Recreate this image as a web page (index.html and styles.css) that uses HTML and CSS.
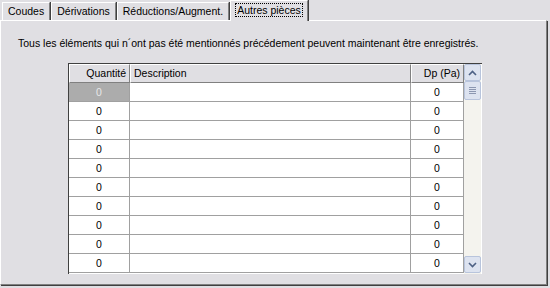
FILE: index.html
```html
<!DOCTYPE html>
<html lang="fr">
<head>
  <meta charset="UTF-8">
  <title>Autres pièces</title>
  <link rel="stylesheet" href="styles.css">
</head>
<body>
  <div class="tabs">
    <div class="tab">Coudes</div>
    <div class="tab">Dérivations</div>
    <div class="tab">Réductions/Augment.</div>
    <div class="tab active"><span class="focus">Autres pièces</span></div>
  </div>
  <div class="panel">
    <p class="note">Tous les éléments qui n´ont pas été mentionnés précédement peuvent maintenant être enregistrés.</p>
    <div class="grid">
      <div class="cells">
        <div class="row head">
          <div class="c qty">Quantité</div>
          <div class="c desc">Description</div>
          <div class="c dp">Dp (Pa)</div>
        </div>
        <div id="rows"></div>
      </div>
      <div class="scroll">
        <div class="btn up"><svg width="9" height="6" viewBox="0 0 9 6"><path d="M1 5 L4.5 1.5 L8 5" fill="none" stroke="#4d6185" stroke-width="1.6"/></svg></div>
        <div class="thumb"><span></span><span></span><span></span><span></span></div>
        <div class="track"></div>
        <div class="btn down"><svg width="9" height="6" viewBox="0 0 9 6"><path d="M1 1 L4.5 4.5 L8 1" fill="none" stroke="#4d6185" stroke-width="1.6"/></svg></div>
      </div>
    </div>
  </div>

  <script>
    const rows = document.getElementById("rows");
    for (let i = 0; i < 10; i++) {
      const r = document.createElement("div");
      r.className = "row" + (i === 0 ? " sel" : "");
      r.innerHTML = '<div class="c qty">0</div><div class="c desc"></div><div class="c dp">0</div>';
      rows.appendChild(r);
    }
  </script>
</body>
</html>
```

FILE: styles.css
```css
body {
  margin: 0;
  background: #e0dfe3;
  font-family: "Liberation Sans", Arial, sans-serif;
  font-size: 10.5px;
  color: #000;
  width: 550px;
  height: 288px;
  overflow: hidden;
}
.tabs {
  display: flex;
  height: 20px;
  padding-left: 2px;
  align-items: flex-end;
}
.tab {
  height: 18px;
  line-height: 17px;
  padding: 0 5px 0 5px;
  border-left: 1px solid #fff;
  border-top: 1px solid #fff;
  border-right: 1px solid #808080;
  box-shadow: 1px 0 0 #404040;
  margin-right: 1px;
  box-sizing: border-box;
}
.tab.active {
  height: 21px;
  margin-bottom: -1px;
  position: relative;
  z-index: 2;
  background: #e0dfe3;
  padding: 0 4px;
  line-height: 19px;
}
.focus {
  border: 1px dotted #000;
  padding: 0 1px;
}
.panel {
  height: 265px;
  width: 547px;
  box-sizing: border-box;
  border-top: 1px solid #fff;
  border-left: 1px solid #fff;
  border-right: 1px solid #808080;
  border-bottom: 1px solid #808080;
  box-shadow: 1px 1px 0 #404040;
  padding: 16px 0 0 16px;
}
.note {
  margin: 0 0 13px 1px;
  line-height: 13px;
}
.grid {
  display: flex;
  margin-left: 51px;
  width: 413px;
  height: 210px;
  border-left: 1px solid #404040;
  border-top: 1px solid #404040;
  background: #fff;
}
.cells {
  width: 395px;
}
.row {
  display: flex;
  height: 19px;
}
.c {
  box-sizing: border-box;
  border-right: 1px solid #a0a0a0;
  border-bottom: 1px solid #a0a0a0;
  line-height: 18px;
  padding: 0 3px;
}
.qty { width: 61px; text-align: center; }
.desc { width: 281px; }
.dp { width: 53px; text-align: center; }
.head .c {
  background: #e0dfe3;
  border-top: 1px solid #fff;
  border-left: 1px solid #fff;
  border-right: 1px solid #808080;
  border-bottom: 1px solid #808080;
  line-height: 16px;
}
.head .qty { text-align: right; }
.head .dp { text-align: right; }
.sel .qty {
  background: #acacac;
  color: #e8e8e8;
}
.scroll {
  width: 17px;
  display: flex;
  flex-direction: column;
  background: #f4f3ee;
}
.btn, .thumb {
  height: 17px;
  box-sizing: border-box;
  border: 1px solid #b8c4dc;
  border-radius: 2px;
  background: #dde3f0;
  display: flex;
  align-items: center;
  justify-content: center;
}
.thumb {
  height: 19px;
  flex-direction: column;
  gap: 1px;
}
.thumb span {
  width: 7px;
  height: 1px;
  background: #8c97b1;
}
.track { flex: 1; }
.down { margin-bottom: 1px; }
```
